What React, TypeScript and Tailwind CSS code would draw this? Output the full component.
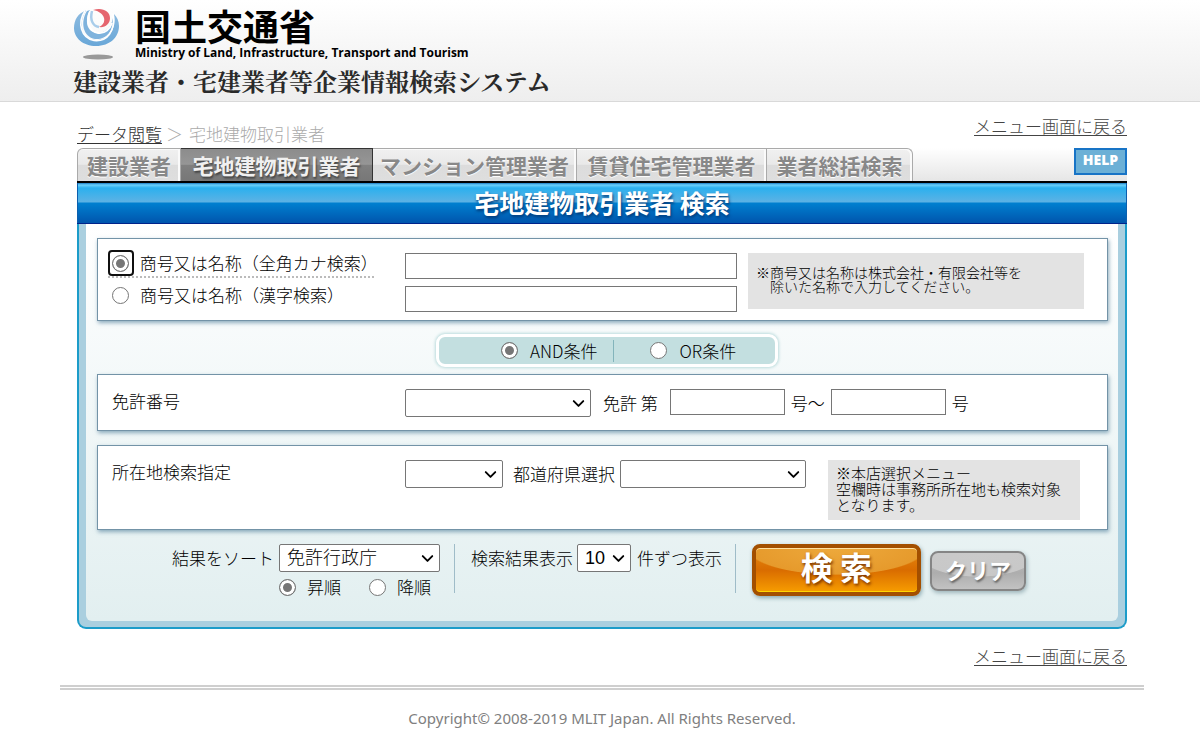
import React, { useState } from 'react';
import { ChevronDown } from 'lucide-react';

const TABS = [
  { label: '建設業者', width: 'w-[104px]' },
  { label: '宅地建物取引業者', width: 'w-[192px]' },
  { label: 'マンション管理業者', width: 'w-[204px]' },
  { label: '賃貸住宅管理業者', width: 'w-[190px]' },
  { label: '業者総括検索', width: 'w-[146px]' },
];

const radioClass =
  'appearance-none shrink-0 size-[17px] rounded-full border border-[#767676] bg-white checked:bg-[#767676] checked:shadow-[inset_0_0_0_3px_white] outline-none';

const textInputClass = 'block h-[26px] border border-[#767676] bg-white px-1 text-[17px] outline-none';

const boxClass =
  'border border-[#7393a7] bg-white shadow-[1px_2px_4px_rgba(70,120,150,0.6)] flex items-start pl-[10px]';

type SelectProps = {
  id: string;
  options: string[];
  className: string;
};

function SelectBox({ id, options, className }: SelectProps) {
  return (
    <div className={`relative h-7 shrink-0 ${className}`}>
      <select
        id={id}
        className="block h-full w-full appearance-none rounded-[2px] border border-[#767676] bg-white pl-[7px] font-['Liberation_Sans','Noto_Sans_CJK_JP',sans-serif] text-[18px] leading-[26px] outline-none"
      >
        {options.map((o) => (
          <option key={o}>{o}</option>
        ))}
      </select>
      <ChevronDown
        className="pointer-events-none absolute right-[3px] top-[5px] size-[19px] text-black"
        strokeWidth={2.4}
      />
    </div>
  );
}

function Logo() {
  return (
    <svg width="48" height="52" viewBox="0 0 48 52" aria-hidden="true">
      <defs>
        <linearGradient id="logoBlue" x1="0" y1="0" x2="0" y2="1">
          <stop offset="0" stopColor="#8dbbe0" />
          <stop offset="1" stopColor="#69a7d8" />
        </linearGradient>
      </defs>
      {/* outer swirl */}
      <path d="M13 2.500C5 5 1 12 1 20c0 10 9 18 22 18 14 0 23-9 23-20 0-5-2-9-5-12 3 16-6 26-18 26C10 32 4 17 13 2.500z" fill="url(#logoBlue)" />
      <path d="M14 3C7 14 10 29 22 31c11 1 19-8 18-21-2 10-8 15-15 15C14 25 11 13 17 2z" fill="#7fb3dd" />
      <path d="M12 3C4 15 8 30 21 32.500 34 34 43 23 40 6" fill="none" stroke="#fff" strokeWidth="1.600" />
      <path d="M17 3c-5 11 0 21 8 22 7 1 12-4 14-10" fill="none" stroke="#fff" strokeWidth="1.800" />
      <path d="M19 3c-2 8 0 15 7 16" fill="none" stroke="#a9cdea" strokeWidth="2.500" />
      <path d="M20 2c9-3 17 1 17 8 0 6-5 10-11 9 4-2 6-5 5-9-1-4-5-7-11-8z" fill="#e5656f" />
      <ellipse cx="25" cy="49" rx="15" ry="2.600" fill="#999" />
    </svg>
  );
}

export default function App() {
  const [target, setTarget] = useState('kana');
  const [condition, setCondition] = useState('and');
  const [order, setOrder] = useState('asc');

  return (
    <div className="bg-white font-['Noto_Sans_CJK_JP',sans-serif] text-[17px] leading-6 font-light text-black">
      <header className="border-b border-[#d9d9d9] bg-linear-to-b from-white to-[#eeeeee] pt-2 pb-1 pl-1">
        <div className="mx-auto max-w-[1058px]">
          <div className="flex">
            <Logo />
            <div className="ml-[14px]">
              <div className="text-[36px] font-bold leading-[34px]">国土交通省</div>
              <div className="font-['Open_Sans',sans-serif] text-[12px] font-bold leading-[22px]">
                Ministry of Land, Infrastructure, Transport and Tourism
              </div>
            </div>
          </div>
          <h1 className="font-['Noto_Serif_CJK_JP','Noto_Sans_CJK_JP',serif] text-[24px] font-bold leading-[33px] text-[#2a2a2a]">
            建設業者・宅建業者等企業情報検索システム
          </h1>
        </div>
      </header>

      <div className="pl-1">
        <main className="mx-auto max-w-[1050px]">
          <div className="flex h-[46px] items-start justify-between">
            <nav className="mt-5">
              <a href="#" className="text-[#333] underline underline-offset-2">データ閲覧</a>
              <span className="ml-1 text-[#aaa]">＞</span>
              <span className="ml-[6px] text-[#aaa]">宅地建物取引業者</span>
            </nav>
            <a href="#" className="mt-3 text-[#444] underline underline-offset-2">メニュー画面に戻る</a>
          </div>

          <div className="flex items-start bg-linear-to-b from-white to-[#e6e6e6]">
            {TABS.map((tab, i) => (
              <button
                key={tab.label}
                type="button"
                className={`h-[33px] shrink-0 border-t border-r text-center text-[21px] font-bold leading-[29px] first:rounded-tl-[6px] first:border-l last-of-type:rounded-tr-[6px] ${tab.width} ${
                  i === 1
                    ? 'border-[#333] bg-[linear-gradient(#8c8c8c,#969696_48%,#808080_50%,#777)] text-[#f0f0f0] [text-shadow:1px_2px_2px_#444]'
                    : 'border-[#aaa] bg-[linear-gradient(#f0f0f0,#e9e9e9_48%,#dcdcdc_50%,#dedede)] text-[#888] shadow-[inset_-2px_1px_0_#fafafa] [text-shadow:0_1px_1px_#fff]'
                }`}
              >
                {tab.label}
              </button>
            ))}
            <a
              href="#"
              className="ml-auto flex h-[27px] w-[53px] justify-center border-2 border-[#1874c6] bg-[#6cb0d6] font-['Open_Sans',sans-serif] text-[14px] font-extrabold leading-5 text-white"
            >
              HELP
            </a>
          </div>

          <h2 className="h-[43px] border-t-2 border-b border-t-black border-b-[#00238a] bg-[linear-gradient(#1a7bc0,#6cd0fa_2px,#2bb0ee_5px,#5db2e4_19px,#0080d0_20px,#0055ad)] text-center text-[25px] font-bold leading-[39px] text-white shadow-[inset_1px_0_0_#0b5fae,inset_-1px_0_0_#0b5fae] [text-shadow:1px_2px_3px_#023a78]">
            宅地建物取引業者 検索
          </h2>

          <form
            className="rounded-b-[9px] border-2 border-t-0 border-[#1c9cc9] bg-[#aacfdf] pb-[6px]"
            onSubmit={(e) => e.preventDefault()}
          >
            <div className="mx-[7px] rounded-b-[6px] bg-linear-to-b from-white to-[#e2eff0] pt-[14px] pr-[10px] pb-[22px] pl-[11px]">
              <div className={`${boxClass} pt-[11px] pb-[8px]`}>
                <div className="w-[297px] shrink-0">
                  <label className="flex h-7 w-[266px] items-center border-b-2 border-dotted border-[#bbb]">
                    <span className="mr-[6px] flex size-[26px] items-center justify-center rounded-[4px] border-2 border-[#101010]">
                      <input
                        type="radio"
                        name="target"
                        className={radioClass}
                        checked={target === 'kana'}
                        onChange={() => setTarget('kana')}
                      />
                    </span>
                    商号又は名称（全角カナ検索）
                  </label>
                  <label className="flex h-[34px] items-center pl-1">
                    <input
                      type="radio"
                      name="target"
                      className={`${radioClass} mr-[11px]`}
                      checked={target === 'kanji'}
                      onChange={() => setTarget('kanji')}
                    />
                    商号又は名称（漢字検索）
                  </label>
                </div>
                <div className="mt-[3px] w-[332px] space-y-[7px]">
                  <input type="text" aria-label="商号又は名称（全角カナ検索）" className={`${textInputClass} w-full`} />
                  <input type="text" aria-label="商号又は名称（漢字検索）" className={`${textInputClass} w-full`} />
                </div>
                <p className="mt-[3px] ml-[11px] h-14 w-[336px] bg-[#e3e3e3] px-2 pt-3 text-[14px] leading-[14px]">
                  ※商号又は名称は株式会社・有限会社等を
                  <br />
                  <span className="pl-[14px]">除いた名称で入力してください。</span>
                </p>
              </div>

              <div className="mt-[13px] flex justify-center pl-[9px]">
                <div className="flex h-[33px] w-[342px] items-center rounded-[9px] border-3 border-white bg-[#c3dfe0] shadow-[0_0_3px_1px_#bcdcdd]">
                  <label className="ml-[62px] flex items-center gap-3">
                    <input
                      type="radio"
                      name="condition"
                      className={radioClass}
                      checked={condition === 'and'}
                      onChange={() => setCondition('and')}
                    />
                    AND条件
                  </label>
                  <span className="ml-4 h-[22px] w-px bg-[#83b4bb]" />
                  <label className="ml-9 flex items-center gap-3">
                    <input
                      type="radio"
                      name="condition"
                      className={radioClass}
                      checked={condition === 'or'}
                      onChange={() => setCondition('or')}
                    />
                    OR条件
                  </label>
                </div>
              </div>

              <div className={`${boxClass} mt-[7px] pt-[14px] pb-[13px]`}>
                <label htmlFor="license" className="w-[297px] shrink-0 pl-1">
                  免許番号
                </label>
                <SelectBox id="license" options={['']} className="w-[186px]" />
                <label htmlFor="noFrom" className="mx-3 pt-[2px]">免許 第</label>
                <input id="noFrom" type="text" className={`${textInputClass} w-[115px]`} />
                <label htmlFor="noTo" className="mx-[6px] pt-[2px]">号～</label>
                <input id="noTo" type="text" className={`${textInputClass} w-[115px]`} />
                <span className="ml-[6px] pt-[2px]">号</span>
              </div>

              <div className={`${boxClass} mt-[14px] pt-[14px] pb-[9px]`}>
                <label htmlFor="area" className="w-[297px] shrink-0 pl-1">
                  所在地検索指定
                </label>
                <SelectBox id="area" options={['']} className="w-[98px]" />
                <label htmlFor="pref" className="mx-[5px] pt-[2px] pl-[5px]">都道府県選択</label>
                <SelectBox id="pref" options={['']} className="w-[186px]" />
                <p className="ml-[22px] h-[60px] w-[252px] bg-[#e3e3e3] pt-[5px] pl-2 text-[15px] leading-4">
                  ※本店選択メニュー
                  <br />
                  空欄時は事務所所在地も検索対象
                  <br />
                  となります。
                </p>
              </div>

              <div className="mt-[14px] flex items-start pl-[75px]">
                <label htmlFor="sort" className="mr-[5px] pt-[2px]">結果をソート</label>
                <div>
                  <SelectBox
                    id="sort"
                    options={['免許行政庁', '免許証番号', '商号又は名称']}
                    className="w-[161px]"
                  />
                  <div className="mt-[3px] flex gap-7">
                    <label className="flex items-center gap-[11px]">
                      <input
                        type="radio"
                        name="order"
                        className={radioClass}
                        checked={order === 'asc'}
                        onChange={() => setOrder('asc')}
                      />
                      昇順
                    </label>
                    <label className="flex items-center gap-[11px]">
                      <input
                        type="radio"
                        name="order"
                        className={radioClass}
                        checked={order === 'desc'}
                        onChange={() => setOrder('desc')}
                      />
                      降順
                    </label>
                  </div>
                </div>
                <span className="ml-[14px] h-[49px] w-px bg-[#9fbcc8]" />
                <label htmlFor="count" className="mr-1 ml-4 pt-[2px]">検索結果表示</label>
                <SelectBox id="count" options={['10', '20', '50']} className="w-[54px]" />
                <span className="ml-[6px] pt-[2px]">件ずつ表示</span>
                <span className="ml-[13px] h-[49px] w-px bg-[#9fbcc8]" />
                <button
                  type="submit"
                  className="ml-4 h-[52px] w-[169px] rounded-[8px] border-4 border-[#a34f00] bg-[radial-gradient(ellipse_90px_27px_at_50%_0,#eda93c_0,#e69a2c_97%,transparent_100%),linear-gradient(#e58a12,#d96c00_50%,#f79d00)] pb-2 text-[32px] font-bold leading-9 text-white shadow-[1px_2px_4px_#8aa9b0,inset_0_1px_0_#ffe0a0,inset_0_-1px_0_#ffd500] [text-shadow:1px_2px_3px_#7a3300]"
                >
                  検 索
                </button>
                <button
                  type="reset"
                  className="mt-[7px] ml-[9px] h-10 w-[96px] rounded-[8px] border-2 border-[#858585] bg-[radial-gradient(ellipse_60px_24px_at_50%_0,#cacaca_0,#c8c8c8_97%,transparent_100%),linear-gradient(#c4c4c4,#adadad_55%,#c2c2c2)] pb-1 text-[22px] font-bold leading-8 text-white shadow-[1px_2px_4px_#9db4ba] [text-shadow:1px_2px_2px_#666]"
                >
                  クリア
                </button>
              </div>
            </div>
          </form>

          <div className="mt-[15px] flex justify-end">
            <a href="#" className="text-[#444] underline underline-offset-2">メニュー画面に戻る</a>
          </div>
        </main>

        <footer className="mx-auto mt-[17px] max-w-[1084px] border-t-[5px] border-double border-[#cfcfcf] pt-4 pb-3 text-center font-['Noto_Sans',sans-serif] text-[15px] font-normal text-[#808080]">
          Copyright© 2008-2019 MLIT Japan. All Rights Reserved.
        </footer>
      </div>
    </div>
  );
}
